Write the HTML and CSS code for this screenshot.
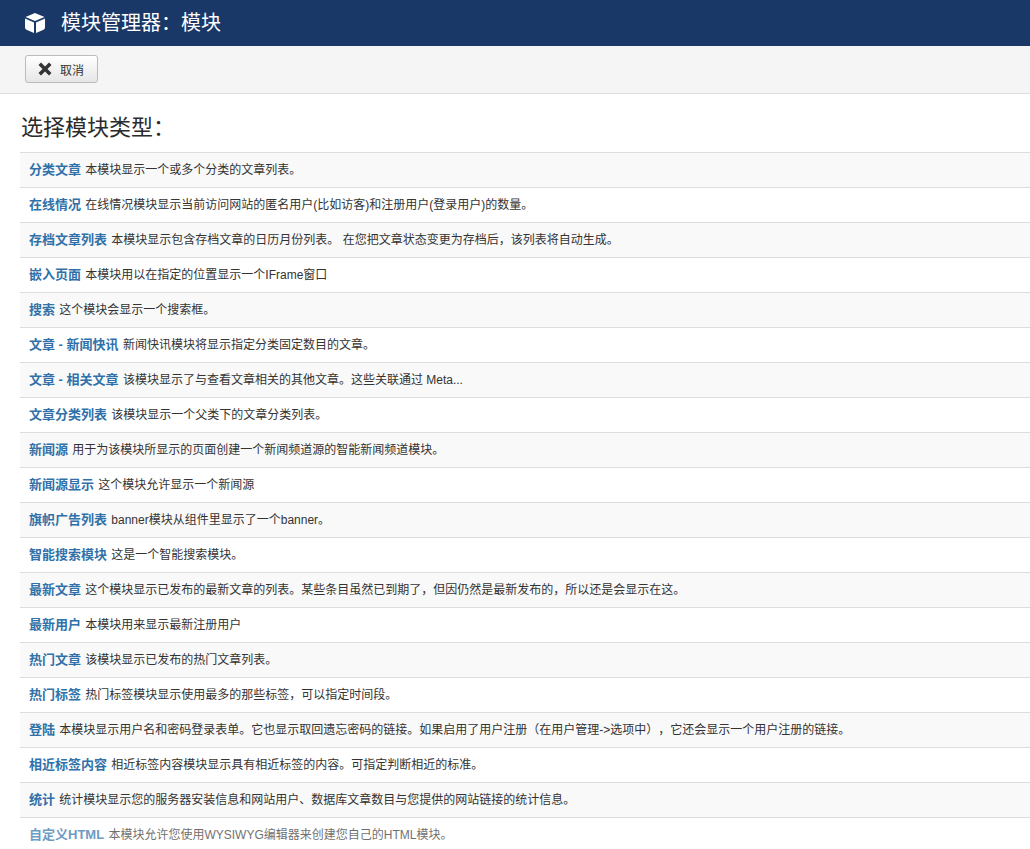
FILE: index.html
```html
<!DOCTYPE html>
<html lang="zh-CN">
<head>
  <meta charset="UTF-8" />
  <title>模块管理器：模块</title>
  <link rel="stylesheet" href="styles.css">
</head>
<body>
  <!-- Header -->
  <header class="header">
    <svg class="header-icon" viewBox="0 0 20 20" width="20" height="20">
      <path fill="#fff" d="M10 0 L19.5 4 L10 8 L0.5 4 Z"/>
      <path fill="#fff" d="M0 5.6 L9 9.4 V20 L2 17 Q0 16.2 0 14.5 Z"/>
      <path fill="#fff" d="M20 5.6 L11 9.4 V20 L18 17 Q20 16.2 20 14.5 Z"/>
    </svg>
    <h1 class="header-title">模块管理器：模块</h1>
  </header>

  <!-- Toolbar -->
  <div class="toolbar">
    <button class="btn">
      <svg class="btn-icon" viewBox="0 0 14 14" width="14" height="14">
        <path fill="#333" d="M3 0.5 L7 4.5 L11 0.5 L13.5 3 L9.5 7 L13.5 11 L11 13.5 L7 9.5 L3 13.5 L0.5 11 L4.5 7 L0.5 3 Z"/>
      </svg>
      取消
    </button>
  </div>

  <main class="content">
    <h2 class="page-title">选择模块类型：</h2>
    <ul class="module-list">
      <li class="module"><a class="module-name">分类文章</a> 本模块显示一个或多个分类的文章列表。</li>
      <li class="module"><a class="module-name">在线情况</a> 在线情况模块显示当前访问网站的匿名用户(比如访客)和注册用户(登录用户)的数量。</li>
      <li class="module"><a class="module-name">存档文章列表</a> 本模块显示包含存档文章的日历月份列表。 在您把文章状态变更为存档后，该列表将自动生成。</li>
      <li class="module"><a class="module-name">嵌入页面</a> 本模块用以在指定的位置显示一个IFrame窗口</li>
      <li class="module"><a class="module-name">搜索</a> 这个模块会显示一个搜索框。</li>
      <li class="module"><a class="module-name">文章 - 新闻快讯</a> 新闻快讯模块将显示指定分类固定数目的文章。</li>
      <li class="module"><a class="module-name">文章 - 相关文章</a> 该模块显示了与查看文章相关的其他文章。这些关联通过 Meta...</li>
      <li class="module"><a class="module-name">文章分类列表</a> 该模块显示一个父类下的文章分类列表。</li>
      <li class="module"><a class="module-name">新闻源</a> 用于为该模块所显示的页面创建一个新闻频道源的智能新闻频道模块。</li>
      <li class="module"><a class="module-name">新闻源显示</a> 这个模块允许显示一个新闻源</li>
      <li class="module"><a class="module-name">旗帜广告列表</a> banner模块从组件里显示了一个banner。</li>
      <li class="module"><a class="module-name">智能搜索模块</a> 这是一个智能搜索模块。</li>
      <li class="module"><a class="module-name">最新文章</a> 这个模块显示已发布的最新文章的列表。某些条目虽然已到期了，但因仍然是最新发布的，所以还是会显示在这。</li>
      <li class="module"><a class="module-name">最新用户</a> 本模块用来显示最新注册用户</li>
      <li class="module"><a class="module-name">热门文章</a> 该模块显示已发布的热门文章列表。</li>
      <li class="module"><a class="module-name">热门标签</a> 热门标签模块显示使用最多的那些标签，可以指定时间段。</li>
      <li class="module"><a class="module-name">登陆</a> 本模块显示用户名和密码登录表单。它也显示取回遗忘密码的链接。如果启用了用户注册（在用户管理-&gt;选项中），它还会显示一个用户注册的链接。</li>
      <li class="module"><a class="module-name">相近标签内容</a> 相近标签内容模块显示具有相近标签的内容。可指定判断相近的标准。</li>
      <li class="module"><a class="module-name">统计</a> 统计模块显示您的服务器安装信息和网站用户、数据库文章数目与您提供的网站链接的统计信息。</li>
      <li class="module module-faded"><a class="module-name">自定义HTML</a> 本模块允许您使用WYSIWYG编辑器来创建您自己的HTML模块。</li>
    </ul>
  </main>
</body>
</html>
```

FILE: styles.css
```css
* { box-sizing: border-box; }
html, body { height: 100%; }
body {
  margin: 0;
  height: 849px;
  overflow: hidden;
  background: #fff;
  color: #333;
  font-family: "Liberation Sans", "Noto Sans CJK SC", sans-serif;
  font-size: 12px;
  line-height: 18px;
  text-spacing-trim: space-all;
}
.header {
  display: flex;
  align-items: center;
  height: 46px;
  padding-left: 25px;
  background: #1a3867;
}
.header-icon { margin-right: 16px; }
.header-title {
  margin: 0;
  color: #fff;
  font-size: 20px;
  font-weight: 400;
}
.toolbar {
  height: 48px;
  padding: 9px 25px 0;
  background: #f5f5f5;
  border-bottom: 1px solid #ddd;
}
.btn {
  display: flex;
  align-items: center;
  width: 73px;
  height: 28px;
  padding: 0 0 0 12px;
  border: 1px solid #bbb;
  border-radius: 3px;
  background: linear-gradient(to bottom, #fff, #e6e6e6);
  color: #333;
  font-family: inherit;
  font-size: 12px;
}
.btn-icon { margin-right: 8px; }
.content { padding: 0 0 0 20px; }
.page-title {
  margin: 0;
  padding: 20px 0 0 1px;
  height: 58px;
  font-size: 22px;
  line-height: 28px;
  font-weight: 400;
  color: #2b2b2b;
}
.module-list {
  margin: 0;
  padding: 0;
  list-style: none;
  border-top: 1px solid #ddd;
}
.module {
  height: 35px;
  padding: 8px 9px;
  border-bottom: 1px solid #ddd;
  white-space: nowrap;
}
.module:nth-child(odd) { background: #f9f9f9; }
.module-name {
  margin-right: 1px;
  color: #3071a9;
  font-size: 13px;
  font-weight: 700;
}
.module-faded {
  opacity: 0.7;
  border-bottom: 0;
}
```
